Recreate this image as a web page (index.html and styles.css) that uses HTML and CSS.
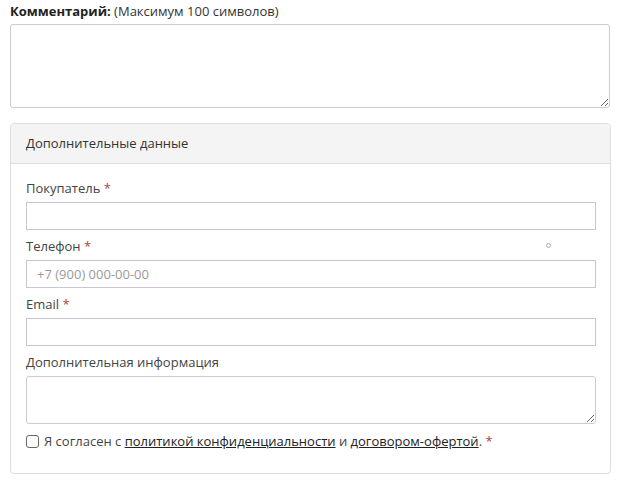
FILE: index.html
```html
<!DOCTYPE html>
<html lang="ru">
<head>
<meta charset="utf-8">
<link rel="stylesheet" href="styles.css">
</head>
<body>
<div class="page">
  <div class="comment-label"><b>Комментарий:</b> (Максимум 100 символов)</div>
  <textarea class="comment"></textarea>
  <div class="panel">
    <div class="panel-head">Дополнительные данные</div>
    <div class="panel-body">
      <div class="group">
        <label class="lbl">Покупатель <span class="req">*</span></label>
        <input class="field" type="text">
      </div>
      <div class="group">
        <label class="lbl">Телефон <span class="req">*</span></label>
        <input class="field" type="text" placeholder="+7 (900) 000-00-00">
        <span class="dot"></span>
      </div>
      <div class="group">
        <label class="lbl">Email <span class="req">*</span></label>
        <input class="field" type="text">
      </div>
      <div class="group">
        <label class="lbl">Дополнительная информация</label>
        <textarea class="info"></textarea>
      </div>
      <div class="agree">
        <span class="box"></span>
        <span>Я согласен с <a href="#">политикой конфиденциальности</a> и <a href="#">договором-офертой</a>. <span class="req">*</span></span>
      </div>
    </div>
  </div>
</div>
</body>
</html>
```
FILE: styles.css
```css
* { box-sizing: border-box; }
html, body { margin: 0; padding: 0; background: #fff; }
body {
  font-family: "Open Sans", "DejaVu Sans", sans-serif;
  font-size: 13px;
  color: #333;
}
.page {
  width: 601px;
  margin-left: 10px;
  padding-top: 1px;
}
.comment-label {
  line-height: 20px;
  margin-bottom: 3px;
}
.comment-label b { color: #222; font-weight: 700; }
.comment {
  display: block;
  width: 600px;
  height: 84px;
  border: 1px solid #ccc;
  border-radius: 3px;
  margin: 0 0 15px 0;
  resize: vertical;
  font-family: inherit;
}
.panel {
  border: 1px solid #ddd;
  border-radius: 4px;
  overflow: hidden;
}
.panel-head {
  background: #f4f4f4;
  border-bottom: 1px solid #ddd;
  padding: 10px 15px;
  line-height: 19px;
  color: #333;
}
.panel-body {
  padding: 14px 15px 22px 15px;
}
.group {
  position: relative;
  display: flex;
  flex-direction: column;
  gap: 4px;
  margin-bottom: 6px;
}
.lbl {
  line-height: 20px;
  color: #444;
}
.req { color: #a5473f; }
.field {
  display: block;
  width: 570px;
  height: 28px;
  border: 1px solid #c5c8d0;
  border-radius: 0;
  padding: 0 10px;
  font-family: inherit;
  font-size: 13px;
  color: #333;
}
.field::placeholder { color: #9a9a9a; }
.dot {
  position: absolute;
  left: 520px;
  top: 7px;
  width: 5px;
  height: 5px;
  border: 1px solid #aaa;
  border-radius: 50%;
}
.info {
  display: block;
  width: 570px;
  height: 48px;
  border: 1px solid #ccc;
  border-radius: 3px;
  resize: vertical;
  font-family: inherit;
}
.agree {
  display: flex;
  align-items: center;
  gap: 5px;
  line-height: 20px;
  margin-top: 7px;
  color: #444;
}
.box {
  display: inline-block;
  width: 13px;
  height: 13px;
  border: 1px solid #666;
  border-radius: 3px;
  flex: none;
}
.agree a { color: #222; text-decoration: underline; }
```
